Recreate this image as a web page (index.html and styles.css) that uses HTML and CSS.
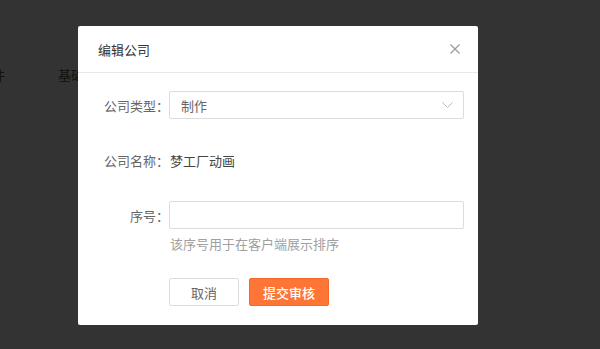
FILE: index.html
```html
<!DOCTYPE html>
<html lang="zh-CN">
<head>
    <meta charset="UTF-8">
    <meta name="viewport" content="width=device-width, initial-scale=1.0">
    <title>编辑公司</title>
    <link rel="stylesheet" href="styles.css">
</head>
<body>

    <div class="page">
        <div class="page-tabs">
            <span class="tab tab-first">文件</span>
            <span class="tab">基础信息</span>
        </div>
    </div>

    <div class="mask"></div>

    <div class="modal">
        <div class="modal-header">
            <h2 class="modal-title">编辑公司</h2>
            <button class="modal-close" aria-label="关闭">
                <svg width="10" height="10" viewBox="0 0 10 10">
                    <path d="M0.5 0.5 L9.5 9.5 M9.5 0.5 L0.5 9.5" stroke="#999" stroke-width="1.2" fill="none"/>
                </svg>
            </button>
        </div>

        <div class="modal-body">
            <div class="form-item">
                <label class="form-label">公司类型：</label>
                <div class="form-control select">
                    <span>制作</span>
                    <svg width="11" height="6" viewBox="0 0 11 6">
                        <path d="M0.5 0.5 L5.5 5.5 L10.5 0.5" stroke="#bbb" stroke-width="1" fill="none"/>
                    </svg>
                </div>
            </div>

            <div class="form-item">
                <label class="form-label">公司名称：</label>
                <div class="form-text">梦工厂动画</div>
            </div>

            <div class="form-item">
                <label class="form-label">序号：</label>
                <input type="text" class="form-control">
            </div>
            <p class="form-hint">该序号用于在客户端展示排序</p>

            <div class="form-actions">
                <button class="btn btn-cancel">取消</button>
                <button class="btn btn-submit">提交审核</button>
            </div>
        </div>
    </div>

</body>
</html>
```

FILE: styles.css
```css
:root {
    --orange: #fe7535; --border: #dcdcdc; --text: #333; --muted: #666; --hint: #a0a0a0;
}
* { box-sizing: border-box; margin: 0; padding: 0; }
body {
    font-family: "Noto Sans CJK SC", "Noto Sans", sans-serif; font-size: 13px;
    background-color: #fff; color: var(--text); width: 600px; height: 349px; overflow: hidden;
}
.page { padding-top: 66px; }
.page-tabs { display: flex; gap: 53px; }
.tab { color: #555; font-size: 13px; line-height: 18px; }
.tab-first { margin-left: -21px; }
.mask { position: absolute; inset: 0; background: rgba(0, 0, 0, 0.8); }

.modal {
    position: absolute; left: 78px; top: 26px; width: 400px; height: 299px;
    background: #fff; border-radius: 2px;
}
.modal-header {
    display: flex; justify-content: space-between; align-items: center;
    height: 47px; padding: 0 18px 0 20px; border-bottom: 1px solid #e8e8e8;
}
.modal-title { font-size: 13px; font-weight: normal; color: var(--text); }
.modal-close { background: none; border: none; display: flex; padding: 0; cursor: pointer; }

.modal-body { padding: 18px 14px 0 20px; }
.form-item { display: flex; align-items: center; height: 28px; margin-bottom: 27px; }
.form-item:nth-of-type(3) { margin-bottom: 0; }
.form-label { width: 71px; text-align: right; color: var(--muted); flex-shrink: 0; }
.form-control {
    flex: 1; height: 28px; border: 1px solid var(--border); border-radius: 2px;
    font-family: inherit; font-size: 13px; color: var(--muted); outline: none; padding: 0 10px;
}
.select { display: flex; align-items: center; justify-content: space-between; padding: 0 10px 0 11px; }
.form-text { color: #444; padding-left: 1px; }
.form-hint { margin: 6px 0 0 72px; line-height: 18px; color: var(--hint); }

.form-actions { display: flex; gap: 10px; margin: 25px 0 0 71px; }
.btn {
    height: 28px; border-radius: 2px; font-family: inherit; font-size: 13px; cursor: pointer;
}
.btn-cancel { width: 70px; background: #fff; border: 1px solid var(--border); color: var(--muted); }
.btn-submit { width: 80px; background: var(--orange); border: 1px solid #f56a2a; color: #fff; font-weight: 500; }
```
